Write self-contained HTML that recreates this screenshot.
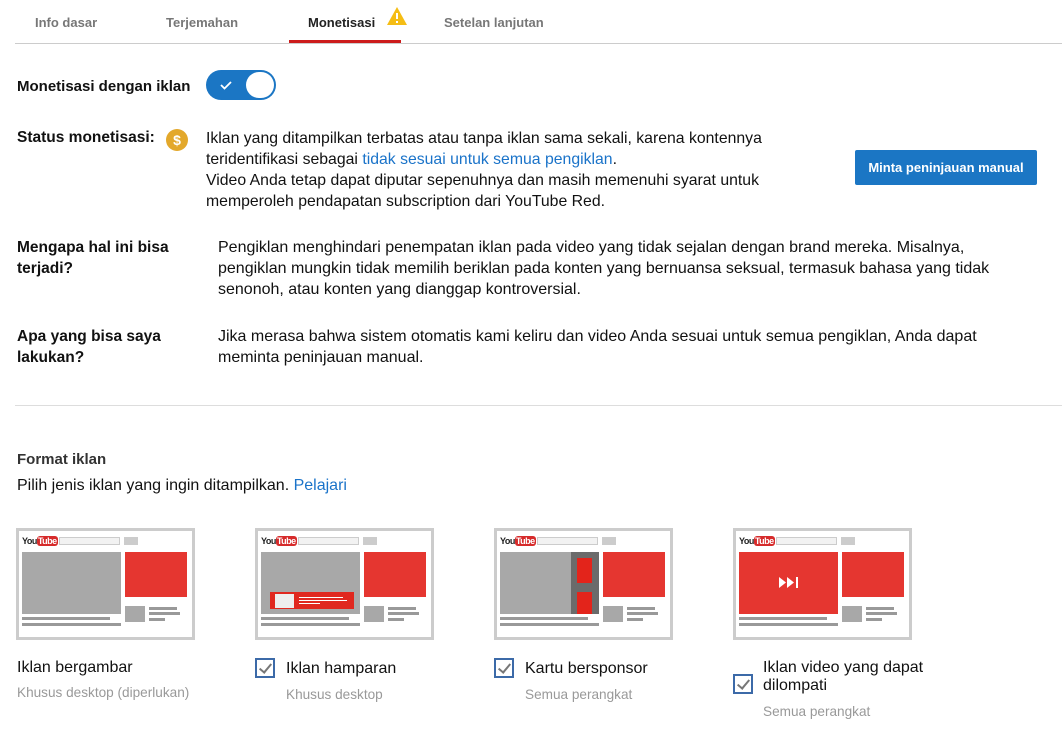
<!DOCTYPE html>
<html><head><meta charset="utf-8"><style>
*{margin:0;padding:0;box-sizing:border-box}
body{width:1062px;height:743px;background:#fff;font-family:"Liberation Sans",sans-serif;color:#111;position:relative;overflow:hidden;font-size:16px}
.a{position:absolute;white-space:nowrap}
.tab{position:absolute;top:15px;font-size:13px;font-weight:bold;color:#777}
.b{font-weight:bold}
.card{position:absolute;top:528px;width:179px;height:112px;border:3px solid #ccc;background:#fff}
.card div{position:absolute}
.logo{left:3px;top:3px;width:30px;height:14px;font-size:9px;font-weight:bold;letter-spacing:-0.5px;color:#222;line-height:14px}
.logo span{background:#d62b2b;color:#fff;border-radius:3px;padding:0 1px}
.g{background:#a8a8a8}.r{background:#e53630}
.sb{left:40px;top:6px;width:61px;height:8px;border:1px solid #ccc;background:#f2f2f2}
.bt{left:105px;top:6px;width:14px;height:8px;background:#ccc}
.l{background:#999;height:3px}
.cb{position:absolute;width:20px;height:20px;border:2px solid #3c6aa8}
.cb:after{content:"";position:absolute;left:5px;top:1px;width:5px;height:10px;border:solid #777;border-width:0 2px 2px 0;transform:rotate(40deg)}
.lbl{position:absolute;font-size:16px;color:#111}
.sub{position:absolute;font-size:13.6px;color:#999}
</style></head><body>
<div class="tab" style="left:35px">Info dasar</div>
<div class="tab" style="left:166px">Terjemahan</div>
<div class="tab" style="left:308px;color:#222">Monetisasi</div>
<svg class="a" style="left:386px;top:6px" width="22" height="20" viewBox="0 0 22 20"><path d="M11 1 L21 19 L1 19Z" fill="#f5bd14"/><rect x="10" y="7" width="2" height="6" fill="#fff"/><rect x="10" y="15" width="2" height="2" fill="#fff"/></svg>
<div class="tab" style="left:444px">Setelan lanjutan</div>
<div class="a" style="left:15px;top:43px;width:1047px;height:1px;background:#ccc"></div>
<div class="a" style="left:289px;top:40px;width:112px;height:3px;background:#cc1b1b"></div>

<div class="a b" style="left:17px;top:78px;font-size:15px">Monetisasi dengan iklan</div>
<div class="a" style="left:206px;top:70px;width:70px;height:30px;border-radius:15px;background:#1b76c4"></div>
<div class="a" style="left:246px;top:72px;width:28px;height:26px;border-radius:13px;background:#fff"></div>
<svg class="a" style="left:219px;top:79px" width="14" height="12"><path d="M2 6 L5.5 9.5 L12 3" stroke="#fff" stroke-width="1.8" fill="none"/></svg>

<div class="a b" style="left:17px;top:129px;font-size:15.5px">Status monetisasi:</div>
<svg class="a" style="left:166px;top:129px" width="22" height="22"><circle cx="11" cy="11" r="11" fill="#e3a82b"/><text x="11" y="16" font-size="14" font-weight="bold" fill="#fff" text-anchor="middle" font-family="Liberation Sans">$</text></svg>
<div class="a" style="left:206px;top:128px;line-height:21px;font-size:15.8px">Iklan yang ditampilkan terbatas atau tanpa iklan sama sekali, karena kontennya<br>teridentifikasi sebagai <span style="color:#1a73c9">tidak sesuai untuk semua pengiklan</span>.<br>Video Anda tetap dapat diputar sepenuhnya dan masih memenuhi syarat untuk<br>memperoleh pendapatan subscription dari YouTube Red.</div>
<div class="a" style="left:855px;top:150px;width:182px;height:35px;background:#1b76c4;border-radius:2px;color:#fff;font-size:13px;font-weight:bold;text-align:center;line-height:35px">Minta peninjauan manual</div>

<div class="a b" style="left:17px;top:237px;line-height:21px;font-size:15.5px">Mengapa hal ini bisa<br>terjadi?</div>
<div class="a" style="left:218px;top:237px;line-height:21px">Pengiklan menghindari penempatan iklan pada video yang tidak sejalan dengan brand mereka. Misalnya,<br>pengiklan mungkin tidak memilih beriklan pada konten yang bernuansa seksual, termasuk bahasa yang tidak<br>senonoh, atau konten yang dianggap kontroversial.</div>
<div class="a b" style="left:17px;top:326px;line-height:21px;font-size:15.5px">Apa yang bisa saya<br>lakukan?</div>
<div class="a" style="left:218px;top:326px;line-height:21px">Jika merasa bahwa sistem otomatis kami keliru dan video Anda sesuai untuk semua pengiklan, Anda dapat<br>meminta peninjauan manual.</div>
<div class="a" style="left:15px;top:405px;width:1047px;height:1px;background:#ddd"></div>

<div class="a" style="left:17px;top:451px;font-size:15px;font-weight:bold;color:#333">Format iklan</div>
<div class="a" style="left:17px;top:477px">Pilih jenis iklan yang ingin ditampilkan. <span style="color:#1a73c9">Pelajari</span></div>

<div class="card" style="left:16px"><div class="logo">You<span>Tube</span></div><div class="sb"></div><div class="bt"></div>
<div class="g" style="left:3px;top:21px;width:99px;height:62px"></div><div class="r" style="left:106px;top:21px;width:62px;height:45px"></div>
<div class="g" style="left:106px;top:75px;width:20px;height:16px"></div><div class="l" style="left:130px;top:76px;width:28px"></div><div class="l" style="left:130px;top:81px;width:31px"></div><div class="l" style="left:130px;top:87px;width:16px"></div>
<div class="l" style="left:3px;top:86px;width:88px"></div><div class="l" style="left:3px;top:92px;width:99px"></div></div>

<div class="card" style="left:255px"><div class="logo">You<span>Tube</span></div><div class="sb"></div><div class="bt"></div>
<div class="g" style="left:3px;top:21px;width:99px;height:62px"></div><div class="r" style="left:106px;top:21px;width:62px;height:45px"></div>
<div style="left:12px;top:61px;width:84px;height:17px;background:#e0281f"></div><div style="left:17px;top:63px;width:19px;height:14px;background:#eee"></div>
<div style="left:41px;top:66px;width:44px;height:1px;background:#fff"></div><div style="left:41px;top:69px;width:48px;height:1px;background:#fff"></div><div style="left:41px;top:72px;width:21px;height:1px;background:#fff"></div>
<div class="g" style="left:106px;top:75px;width:20px;height:16px"></div><div class="l" style="left:130px;top:76px;width:28px"></div><div class="l" style="left:130px;top:81px;width:31px"></div><div class="l" style="left:130px;top:87px;width:16px"></div>
<div class="l" style="left:3px;top:86px;width:88px"></div><div class="l" style="left:3px;top:92px;width:99px"></div></div>

<div class="card" style="left:494px"><div class="logo">You<span>Tube</span></div><div class="sb"></div><div class="bt"></div>
<div class="g" style="left:3px;top:21px;width:99px;height:62px"></div><div style="left:74px;top:21px;width:28px;height:62px;background:#6b6b6b"></div>
<div style="left:80px;top:27px;width:15px;height:25px;background:#e3241b"></div><div style="left:80px;top:61px;width:15px;height:22px;background:#e3241b"></div>
<div class="r" style="left:106px;top:21px;width:62px;height:45px"></div>
<div class="g" style="left:106px;top:75px;width:20px;height:16px"></div><div class="l" style="left:130px;top:76px;width:28px"></div><div class="l" style="left:130px;top:81px;width:31px"></div><div class="l" style="left:130px;top:87px;width:16px"></div>
<div class="l" style="left:3px;top:86px;width:88px"></div><div class="l" style="left:3px;top:92px;width:99px"></div></div>

<div class="card" style="left:733px"><div class="logo">You<span>Tube</span></div><div class="sb"></div><div class="bt"></div>
<div class="r" style="left:3px;top:21px;width:99px;height:62px"></div>
<svg style="position:absolute;left:43px;top:45px" width="22" height="14"><path d="M0 1 L7 6.5 L0 12Z M8 1 L15 6.5 L8 12Z" fill="#fff"/><rect x="17" y="1" width="2" height="11" fill="#fff"/></svg>
<div class="r" style="left:106px;top:21px;width:62px;height:45px"></div>
<div class="g" style="left:106px;top:75px;width:20px;height:16px"></div><div class="l" style="left:130px;top:76px;width:28px"></div><div class="l" style="left:130px;top:81px;width:31px"></div><div class="l" style="left:130px;top:87px;width:16px"></div>
<div class="l" style="left:3px;top:86px;width:88px"></div><div class="l" style="left:3px;top:92px;width:99px"></div></div>

<div class="lbl" style="left:17px;top:659px">Iklan bergambar</div>
<div class="sub" style="left:17px;top:685px">Khusus desktop (diperlukan)</div>
<div class="cb" style="left:255px;top:658px"></div>
<div class="lbl" style="left:286px;top:660px">Iklan hamparan</div>
<div class="sub" style="left:286px;top:687px">Khusus desktop</div>
<div class="cb" style="left:494px;top:658px"></div>
<div class="lbl" style="left:525px;top:660px">Kartu bersponsor</div>
<div class="sub" style="left:525px;top:687px">Semua perangkat</div>
<div class="cb" style="left:733px;top:674px"></div>
<div class="lbl" style="left:763px;top:659px;line-height:18px">Iklan video yang dapat<br>dilompati</div>
<div class="sub" style="left:763px;top:704px">Semua perangkat</div>
</body></html>
